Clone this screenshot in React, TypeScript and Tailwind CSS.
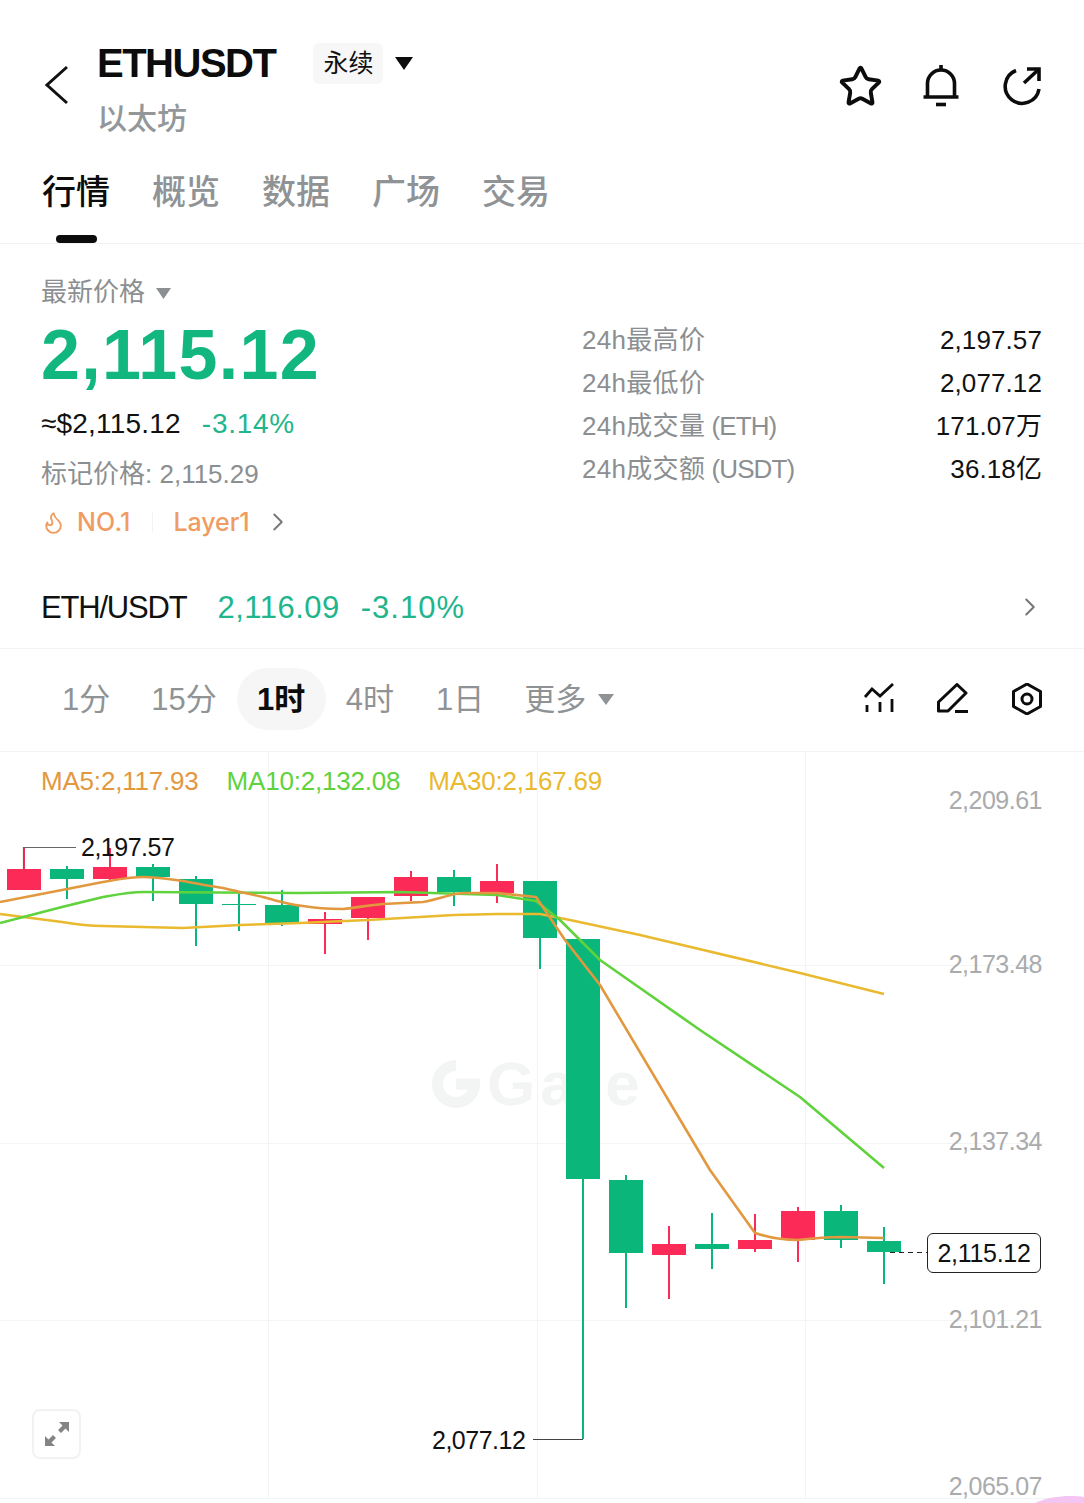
import { Star, Flame, ChevronRight } from "lucide-react";

const GREEN = "#0ab67a";
const RED = "#fb2a56";

// [center x, body top, body bottom, wick top, wick bottom, color]
const candles: [number, number, number, number, number, string][] = [
  [24, 869, 890, 847, 869, RED],
  [67, 869, 879, 866, 899, GREEN],
  [110, 867, 879, 848, 882, RED],
  [153, 867, 877, 864, 901, GREEN],
  [196, 879, 904, 876, 946, GREEN],
  [239, 904, 905, 894, 931, GREEN],
  [282, 905, 923, 890, 926, GREEN],
  [325, 919, 924, 912, 954, RED],
  [368, 897, 918, 897, 940, RED],
  [411, 877, 896, 871, 901, RED],
  [454, 877, 892, 870, 906, GREEN],
  [497, 881, 893, 864, 903, RED],
  [540, 881, 938, 881, 969, GREEN],
  [583, 939, 1179, 939, 1439, GREEN],
  [626, 1180, 1253, 1175, 1308, GREEN],
  [669, 1244, 1255, 1226, 1299, RED],
  [712, 1244, 1249, 1213, 1269, GREEN],
  [755, 1240, 1249, 1214, 1252, RED],
  [798, 1211, 1240, 1207, 1262, RED],
  [841, 1211, 1240, 1205, 1248, GREEN],
  [884, 1241, 1252, 1227, 1284, GREEN],
];

const ma5 =
  "M0 902 L62 890 L103 882 C120 879 130 877 143 877 C155 877 168 879 183 881 C200 884 210 886 223 888 C240 892 250 894 263 897 C280 902 290 905 303 906 C320 909 330 909 343 909 C360 907 370 905 383 904 L423 902 C440 899 450 894 463 893 L497 893 L536 897 L565 940 L600 985 L710 1170 L755 1233 C770 1238 785 1240 798 1240 C815 1238 825 1237 841 1237 L884 1238";
const ma10 =
  "M0 923 L62 907 L103 897 C120 894 130 892 143 892 L300 893 L400 892 L497 895 L536 901 L560 920 L600 960 L700 1030 L800 1097 L884 1168";
const ma30 =
  "M0 914 L62 922 C80 925 90 926 103 926 L183 928 L240 925 L300 923 L368 920 L454 915 L497 914 L540 914 L570 920 L640 935 L800 973 L884 994";

const axisLabels = [
  ["top-[36px]", "2,209.61"],
  ["top-[200px]", "2,173.48"],
  ["top-[377px]", "2,137.34"],
  ["top-[555px]", "2,101.21"],
  ["top-[722px]", "2,065.07"],
];

const stats = [
  ["24h最高价", "", "2,197.57"],
  ["24h最低价", "", "2,077.12"],
  ["24h成交量", " (ETH)", "171.07万"],
  ["24h成交额", " (USDT)", "36.18亿"],
];

const App = () => {
  return (
    <div className="w-[1084px] h-[1503px] overflow-hidden bg-white text-[#111] font-['Liberation_Sans','Noto_Sans_CJK_SC',sans-serif]">
      {/* Header */}
      <div className="h-[244px] border-b border-[#f3f3f3]">
        <div className="flex pt-[38px] h-[136px]">
          <div className="w-[97px] pl-[44px] pt-[27px] shrink-0">
            <svg width="26" height="40" viewBox="0 0 26 40" fill="none" stroke="#111" strokeWidth="3">
              <path d="M23 2 L3 20 L23 38" />
            </svg>
          </div>
          <div className="flex-1">
            <div className="flex items-center h-[50px]">
              <span className="text-[40px] leading-none font-bold tracking-[-1.5px] text-[#0c0c0c]">ETHUSDT</span>
              <span className="ml-[38px] w-[70px] h-[41px] rounded-md bg-[#f7f7f7] flex items-center justify-center text-[25px] leading-none">永续</span>
              <svg className="ml-[12px]" width="18" height="13" viewBox="0 0 18 13">
                <path d="M0 0 H18 L9 13 Z" fill="#0c0c0c" />
              </svg>
            </div>
            <div className="mt-[13px] h-[36px] flex items-center text-[30px] leading-none font-medium text-[#93979a]">以太坊</div>
          </div>
          <div className="flex gap-[33px] pr-[38px] pt-[24px]">
            <div className="w-12 h-12 flex items-center justify-center">
              <Star size={45} strokeWidth={2.1} color="#0c0c0c" />
            </div>
            <svg className="w-12 h-12" viewBox="0 0 48 48" fill="none" stroke="#0c0c0c" strokeWidth="3.6">
              <path d="M10.5 35 V21.5 a13.5 13.5 0 0 1 27 0 V35" />
              <path d="M6.5 35 H41.5" />
              <path d="M19 42.5 H29" />
              <path d="M24 3 V8" />
            </svg>
            <svg className="w-12 h-12" viewBox="0 0 48 48" fill="none" stroke="#0c0c0c" strokeWidth="3.6">
              <path d="M18 8.5 A17 17 0 1 0 41 27" />
              <path d="M26 21 L40 8" />
              <path d="M29 7 H41 V19" />
            </svg>
          </div>
        </div>
        <div className="flex gap-[42px] pl-[42px] mt-[36px] h-[40px] items-center text-[34px] leading-none font-medium text-[#8f9395]">
          <span className="text-[#0c0c0c]">行情</span>
          <span>概览</span>
          <span>数据</span>
          <span>广场</span>
          <span>交易</span>
        </div>
        <div className="ml-[56px] mt-[23px] w-[41px] h-[8px] rounded-full bg-[#0c0c0c]" />
      </div>

      {/* Price info */}
      <div className="h-[405px] border-b border-[#f3f3f3]">
        <div className="flex justify-between pl-[41px] pr-[42px]">
          <div>
            <div className="pt-[35px] flex items-center h-[61px] text-[26px] leading-none text-[#8c8f91]">
              最新价格
              <svg className="ml-[11px] mt-[2px]" width="15" height="11" viewBox="0 0 15 11">
                <path d="M0 0 H15 L7.5 11 Z" fill="#8c8f91" />
              </svg>
            </div>
            <div className="mt-[15px] h-[70px] text-[70px] leading-none font-bold tracking-[1.3px] text-[#12b77f] whitespace-nowrap">2,115.12</div>
            <div className="mt-[19px] h-[30px] flex items-center text-[28px] leading-none whitespace-nowrap">
              <span className="tracking-[0.2px]">≈$2,115.12</span>
              <span className="ml-[21px] text-[#21b58c] tracking-[0.7px]">-3.14%</span>
            </div>
            <div className="mt-[22px] h-[26px] flex items-center text-[26px] leading-none text-[#8c8f91] whitespace-nowrap">标记价格: 2,115.29</div>
            <div className="mt-[22px] h-[26px] flex items-center text-[25px] leading-none font-medium text-[#ef9c62] whitespace-nowrap font-['Inter','Noto_Sans_CJK_SC',sans-serif]">
              <Flame size={25} strokeWidth={1.8} />
              <span className="ml-[11px] tracking-[0.2px]">NO.1</span>
              <span className="ml-[21px] w-px h-[20px] bg-[#f3f3f3]" />
              <span className="ml-[21px] tracking-[-0.1px]">Layer1</span>
              <ChevronRight size={30} strokeWidth={1.5} color="#777" className="ml-[13px]" />
            </div>
          </div>
          <div className="w-[460px] pt-[74px]">
            {stats.map(([label, unit, value]) => (
              <div key={label} className="h-[43px] flex items-center justify-between text-[26px] leading-none whitespace-nowrap">
                <span className="text-[#8c8f91] tracking-[0.3px] whitespace-pre">
                  {label}
                  <span className="tracking-[-0.9px]">{unit}</span>
                </span>
                <span className="tracking-[0.1px]">{value}</span>
              </div>
            ))}
          </div>
        </div>
        <div className="mt-[54px] h-[36px] flex items-center pl-[41px] pr-[39px] text-[31px] leading-none whitespace-nowrap">
          <span className="tracking-[-1.2px]">ETH/USDT</span>
          <span className="ml-[31px] text-[#21b58c] tracking-[0.5px]">2,116.09</span>
          <span className="ml-[21px] text-[#21b58c] tracking-[1px]">-3.10%</span>
          <ChevronRight size={30} strokeWidth={1.6} color="#777" className="ml-auto" />
        </div>
      </div>

      {/* Interval bar */}
      <div className="h-[103px] border-b border-[#f3f3f3] flex items-center pb-[2px] pl-[62px] pr-[41px] text-[31px] leading-none text-[#8f9395] whitespace-nowrap">
        <span>1分</span>
        <span className="ml-[41px]">15分</span>
        <span className="ml-[20px] w-[89px] h-[62px] rounded-full bg-[#f6f6f6] flex items-center justify-center font-bold text-[#0c0c0c]">1时</span>
        <span className="ml-[20px]">4时</span>
        <span className="ml-[42px]">1日</span>
        <span className="ml-[40px]">更多</span>
        <svg className="ml-[12px]" width="16" height="11" viewBox="0 0 16 11">
          <path d="M0 0 H16 L8 11 Z" fill="#8f9395" />
        </svg>
        <div className="ml-auto flex gap-[42px]">
          <svg className="w-8 h-8" viewBox="0 0 32 32" fill="none" stroke="#0c0c0c" strokeWidth="2.8">
            <path d="M2 14 L9 6 L17 13 L30 1" />
            <path d="M4 29 V22 M17 29 V19 M29 29 V16" />
          </svg>
          <svg className="w-8 h-8" viewBox="0 0 32 32" fill="none" stroke="#0c0c0c" strokeWidth="3" strokeLinejoin="round">
            <path d="M1.5 19 L20 1.5 L29 10 L11 28 H1.5 Z" />
            <path d="M18 28.5 H31" />
          </svg>
          <svg className="w-8 h-8" viewBox="0 0 32 32" fill="none" stroke="#0c0c0c" strokeWidth="3" strokeLinejoin="round">
            <path d="M16 1 L29.5 8.5 V23.5 L16 31 L2.5 23.5 V8.5 Z" />
            <circle cx="16" cy="16" r="5" />
          </svg>
        </div>
      </div>

      {/* Chart */}
      <div className="relative h-[751px]">
        {/* Watermark */}
        <div className="absolute left-[432px] top-[301px] flex items-center text-[#f3f4f4]">
          <svg width="48" height="48" viewBox="0 0 48 48" fill="none" stroke="#f3f4f4" strokeWidth="11">
            <path d="M24 5.5 A18.5 18.5 0 1 0 42.5 24 H24" />
          </svg>
          <span className="ml-[7px] text-[62px] leading-none font-bold tracking-[5px]">Gate</span>
        </div>

        <svg className="absolute inset-0" width="1084" height="751" viewBox="0 752 1084 751" fill="none">
          <g stroke="#f3f4f4" strokeWidth="1">
            <path d="M268.5 752 V1498 M537.5 752 V1498 M805.5 752 V1498" />
            <path d="M0 965.5 H1043 M0 1143.5 H1043 M0 1320.5 H1043 M0 1498.5 H1084" />
          </g>
          {candles.map(([x, top, bottom, wickTop, wickBottom, color]) => (
            <g key={x}>
              <path d={`M${x} ${wickTop} V${wickBottom}`} stroke={color} strokeWidth="2" />
              <rect x={x - 17} y={top} width="34" height={bottom - top} fill={color} />
            </g>
          ))}
          <path d={ma30} stroke="#e9b92f" strokeWidth="2.6" strokeLinejoin="round" />
          <path d={ma10} stroke="#5fd23c" strokeWidth="2.6" strokeLinejoin="round" />
          <path d={ma5} stroke="#e2983f" strokeWidth="2.6" strokeLinejoin="round" />
          <path d="M23.5 869 V847.5 H76" stroke="#666" strokeWidth="1.2" />
          <path d="M533 1439.5 H583" stroke="#444" strokeWidth="1.2" />
          <path d="M890 1252.5 H927" stroke="#222" strokeWidth="1" strokeDasharray="5 4" />
          <path d="M1035 1503 C1050 1496 1070 1495 1084 1497 V1503 Z" fill="#f4c4f2" />
        </svg>

        {/* MA legend */}
        <div className="absolute left-[41px] top-[16px] flex gap-[28px] text-[26px] leading-none tracking-[-0.2px] whitespace-nowrap">
          <span className="text-[#e2983f]">MA5:2,117.93</span>
          <span className="text-[#5fd23c]">MA10:2,132.08</span>
          <span className="text-[#e9b92f]">MA30:2,167.69</span>
        </div>

        {/* Y axis */}
        {axisLabels.map(([pos, text]) => (
          <span key={text} className={`absolute right-[42px] ${pos} text-[25px] leading-none tracking-[-0.5px] text-[#a9abad]`}>
            {text}
          </span>
        ))}

        {/* High, low and last price */}
        <span className="absolute left-[81px] top-[83px] text-[25px] leading-none tracking-[-0.5px]">2,197.57</span>
        <span className="absolute left-[432px] top-[676px] text-[25px] leading-none tracking-[-0.5px]">2,077.12</span>
        <div className="absolute left-[927px] top-[481px] w-[114px] h-[40px] rounded-md border border-[#222] bg-white flex items-center justify-center text-[25px] leading-none tracking-[-0.3px]">
          2,115.12
        </div>

        {/* Fullscreen button */}
        <div className="absolute left-[32px] top-[657px] w-[49px] h-[50px] rounded-lg border-2 border-[#f2f2f2] bg-white flex items-center justify-center">
          <svg width="26" height="26" viewBox="0 0 26 26" fill="#848484">
            <path d="M15 1 H25 V11 L21.5 7.5 L17 12 L14 9 L18.5 4.5 Z" />
            <path d="M11 25 H1 V15 L4.5 18.5 L9 14 L12 17 L7.5 21.5 Z" />
          </svg>
        </div>
      </div>
    </div>
  );
};

export default App;
